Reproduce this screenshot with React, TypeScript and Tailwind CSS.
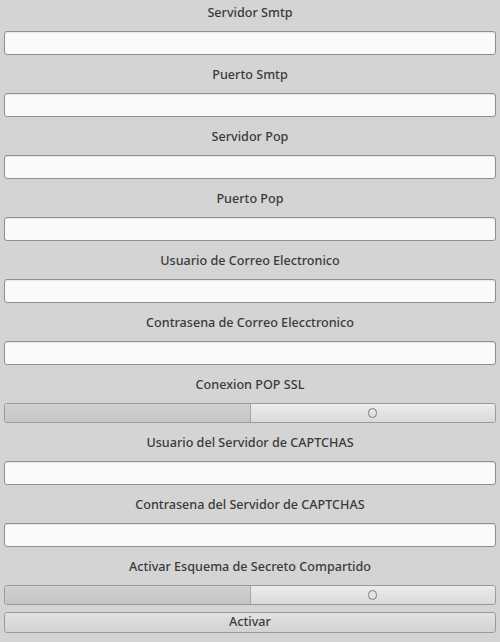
import React from "react";

const font = { fontFamily: '"Noto Sans", "Open Sans", sans-serif' };

const Label = ({ text }: { text: string }) => (
  <div className="h-[26px] flex items-center justify-center text-[12.6px] font-medium text-[#3a3a3a] mb-[5px]">
    {text}
  </div>
);

const Field = ({ label }: { label: string }) => (
  <div className="mb-[7px]">
    <Label text={label} />
    <input
      type="text"
      className="block w-full h-[24px] rounded-[3px] border border-[#8f8f8f] bg-[#fafafa] shadow-[inset_0_1px_1px_rgba(0,0,0,0.08)] outline-none"
    />
  </div>
);

const Toggle = ({ label }: { label: string }) => (
  <div className="mb-[7px]">
    <Label text={label} />
    <div className="flex h-[20px] rounded-[3px] border border-[#9a9a9a] overflow-hidden">
      <div className="flex-1 bg-gradient-to-b from-[#d0d0d0] to-[#c6c6c6] border-r border-[#a8a8a8]" />
      <div className="flex-1 flex items-center justify-center bg-gradient-to-b from-[#ececec] to-[#dadada]">
        <span className="w-[9px] h-[10px] rounded-full border border-[#7a7a7a]" />
      </div>
    </div>
  </div>
);

export default function App() {
  return (
    <div className="w-[500px] h-[642px] bg-[#d4d4d4] px-[4px] overflow-hidden" style={font}>
      <Field label="Servidor Smtp" />
      <Field label="Puerto Smtp" />
      <Field label="Servidor Pop" />
      <Field label="Puerto Pop" />
      <Field label="Usuario de Correo Electronico" />
      <Field label="Contrasena de Correo Elecctronico" />
      <Toggle label="Conexion POP SSL" />
      <Field label="Usuario del Servidor de CAPTCHAS" />
      <Field label="Contrasena del Servidor de CAPTCHAS" />
      <Toggle label="Activar Esquema de Secreto Compartido" />
      <button className="block w-full h-[21px] mt-[5px] rounded-[3px] border border-[#9a9a9a] bg-gradient-to-b from-[#e2e2e2] to-[#d2d2d2] text-[12.6px] font-medium text-[#3a3a3a] leading-none">
        Activar
      </button>
    </div>
  );
}
